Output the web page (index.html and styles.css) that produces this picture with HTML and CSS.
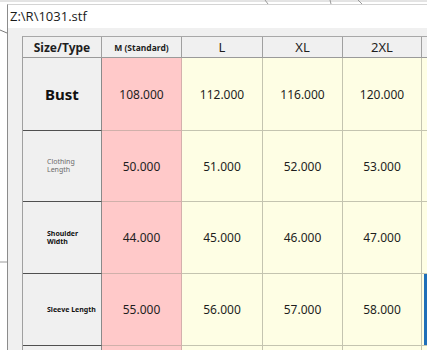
FILE: index.html
```html
<!DOCTYPE html>
<html>
<head>
<meta charset="utf-8">
<link rel="stylesheet" href="styles.css">
</head>
<body>
<svg class="desk" width="427" height="350" viewBox="0 0 427 350">
  <line x1="0" y1="1" x2="427" y2="1" stroke="#c8c8c8"/>
  <line x1="265" y1="0" x2="268" y2="4" stroke="#9a9a9a"/>
  <line x1="330" y1="0" x2="331" y2="4" stroke="#9a9a9a"/>
  <line x1="358" y1="0" x2="362" y2="4" stroke="#9a9a9a"/>
  <line x1="0" y1="30" x2="7" y2="33" stroke="#7a7a7a"/>
  <line x1="0" y1="262" x2="7" y2="262" stroke="#9a9a9a"/>
</svg>
<div class="window">
  <div class="titlebar">Z:\R\1031.stf</div>
  <div class="client">
    <div class="grid">
      <div class="hd first">Size/Type</div>
      <div class="hd small">M (Standard)</div>
      <div class="hd">L</div>
      <div class="hd">XL</div>
      <div class="hd">2XL</div>
      <div class="hd ex"></div>

      <div class="rh big">Bust</div>
      <div class="pk">108.000</div>
      <div class="yl">112.000</div>
      <div class="yl">116.000</div>
      <div class="yl">120.000</div>
      <div class="yl ex"></div>

      <div class="rh tiny gray">Clothing<br>Length</div>
      <div class="pk">50.000</div>
      <div class="yl">51.000</div>
      <div class="yl">52.000</div>
      <div class="yl">53.000</div>
      <div class="yl ex"></div>

      <div class="rh tiny">Shoulder<br>Width</div>
      <div class="pk">44.000</div>
      <div class="yl">45.000</div>
      <div class="yl">46.000</div>
      <div class="yl">47.000</div>
      <div class="yl ex"></div>

      <div class="rh tiny">Sleeve Length</div>
      <div class="pk">55.000</div>
      <div class="yl">56.000</div>
      <div class="yl">57.000</div>
      <div class="yl">58.000</div>
      <div class="yl ex sel"></div>

      <div class="rh"></div>
      <div class="pk"></div>
      <div class="yl"></div>
      <div class="yl"></div>
      <div class="yl"></div>
      <div class="yl ex"></div>
    </div>
  </div>
</div>
</body>
</html>
```
FILE: styles.css
```css
html, body {
  margin: 0;
  padding: 0;
}
body {
  width: 427px;
  height: 350px;
  overflow: hidden;
  background: #ffffff;
  position: relative;
  font-family: "Noto Sans", "Open Sans", sans-serif;
}
.desk {
  position: absolute;
  left: 0;
  top: 0;
}
.window {
  position: relative;
  margin: 4px 0 0 7px;
  width: 420px;
  height: 346px;
  overflow: hidden;
  border-left: 1px solid #8c8c8c;
  border-top: 1px solid #d4d4d4;
  background: #f0f0f0;
  box-sizing: border-box;
}
.titlebar {
  height: 23px;
  background: #ffffff;
  font-family: "Open Sans", "Noto Sans", sans-serif;
  font-size: 13px;
  line-height: 22px;
  color: #1a1a1a;
  padding-left: 2px;
}
.client {
  padding: 8px 0 0 14px;
}
.grid {
  display: grid;
  grid-template-columns: 79px 80px 81px 80px 79px 30px;
  grid-template-rows: 21px 73px 71px 72px 72px 30px;
  border-top: 1px solid #a8a8a8;
  border-left: 1px solid #a0a0a0;
}
.grid > div {
  box-sizing: border-box;
  display: flex;
  align-items: center;
  justify-content: center;
  font-size: 12px;
  color: #1e1e1e;
}
.hd {
  background: #f0f0f0;
  border-right: 1px solid #a0a0a0;
  border-bottom: 1px solid #9a9a9a;
  font-size: 13px !important;
  color: #202020;
}
.hd.first {
  font-weight: bold;
  font-size: 12px !important;
}
.hd.small {
  font-weight: bold;
  font-size: 8.5px !important;
}
.rh {
  background: #f0f0f0;
  border-right: 1px solid #8a8a8a;
  border-bottom: 1px solid #505050;
}
.rh.big {
  font-weight: bold;
  font-size: 15px !important;
  color: #111;
}
.rh.tiny {
  justify-content: flex-start !important;
  padding-left: 24px;
  font-size: 7px !important;
  line-height: 8px;
  font-weight: bold;
  color: #111;
}
.rh.tiny.gray {
  font-weight: normal;
  color: #6a6a6a;
}
.pk {
  background: #ffc9c9;
  border-right: 1px solid #d4b0ac;
  border-bottom: 1px solid #d0b0aa;
}
.yl {
  background: #fefee4;
  border-right: 1px solid #c4c4b0;
  border-bottom: 1px solid #c4c4b0;
}
.ex.sel {
  background: linear-gradient(to right, #fefee4 0 2px, #1f6fb8 2px);
}
```
